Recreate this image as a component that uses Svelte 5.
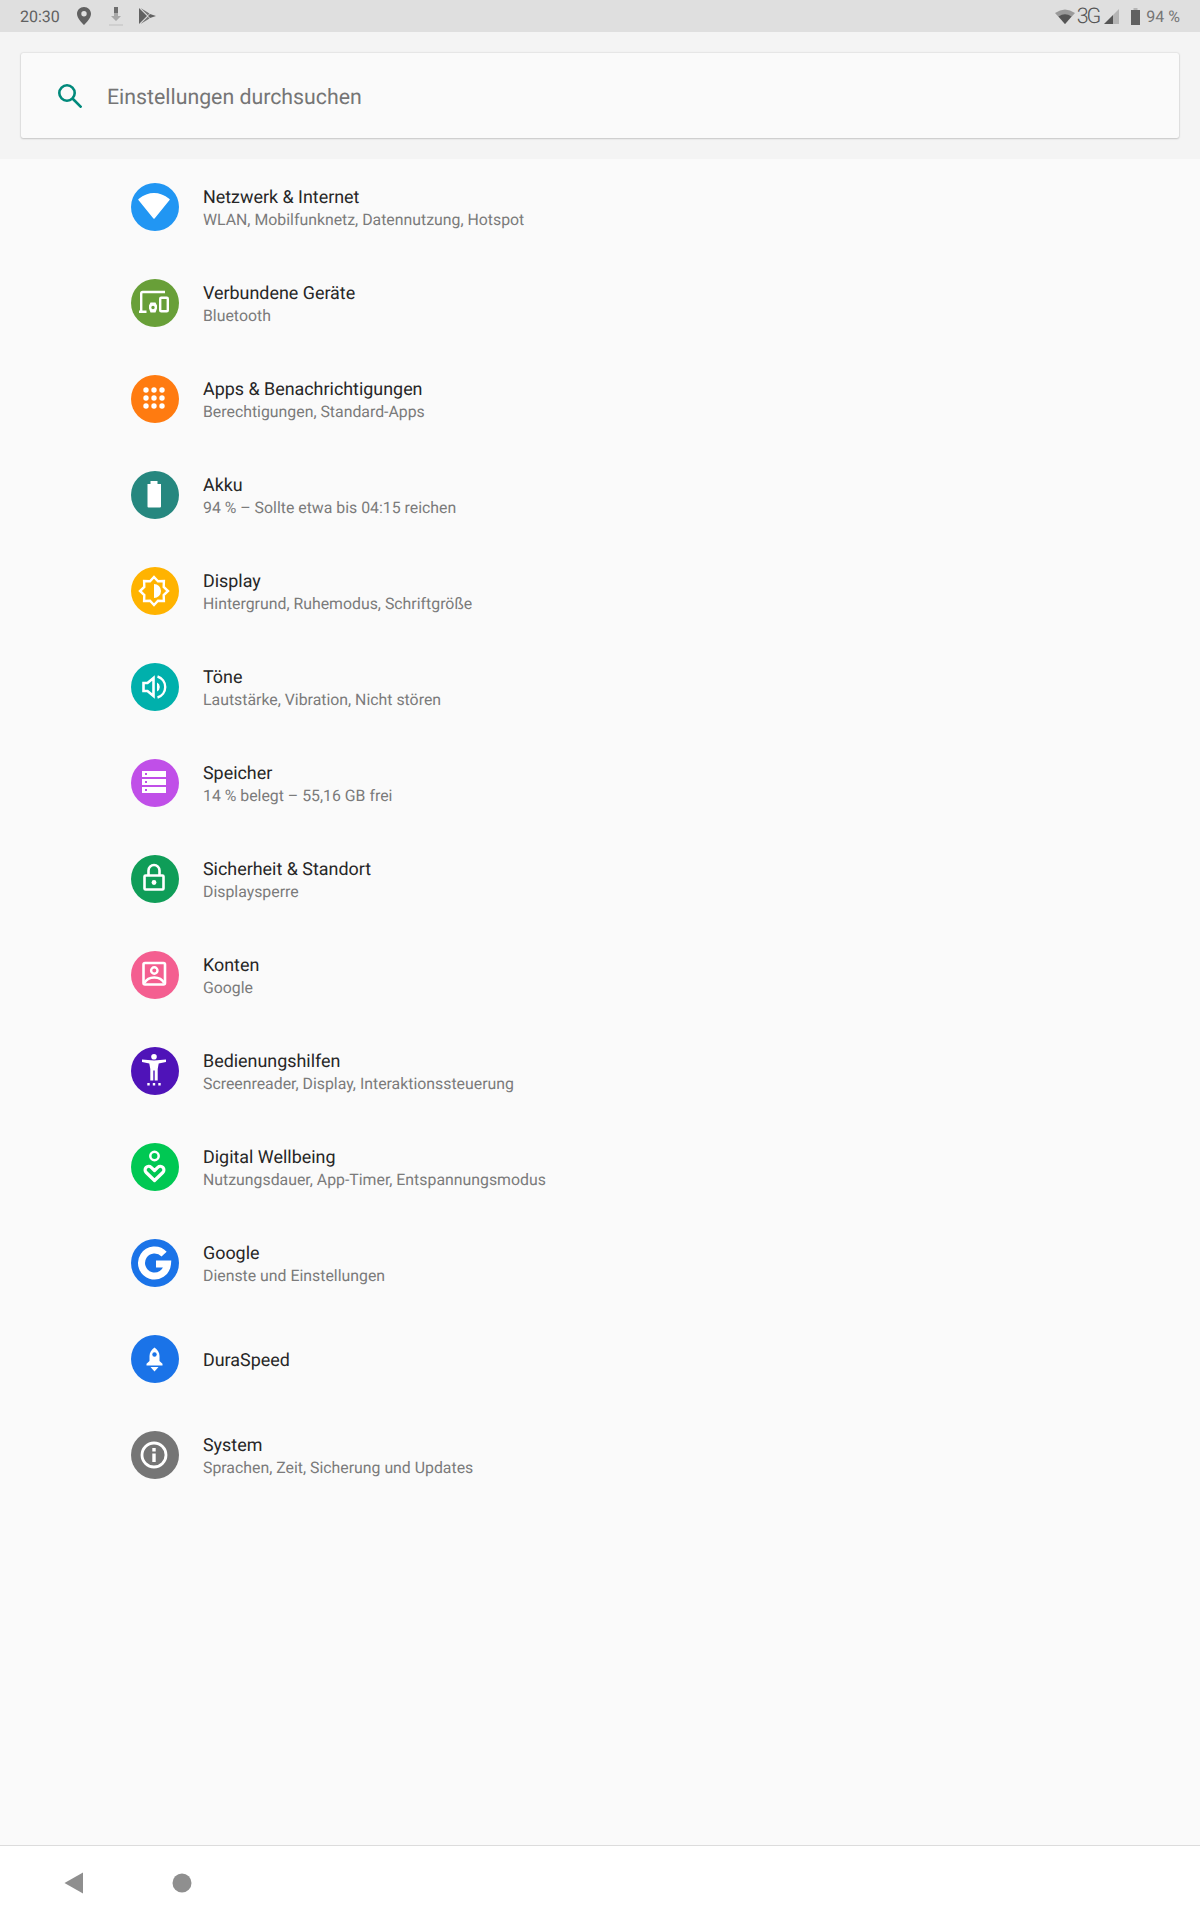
<script>
	const items = [
		{ icon: 'wifi', color: '#2196f3', title: 'Netzwerk & Internet', sub: 'WLAN, Mobilfunknetz, Datennutzung, Hotspot' },
		{ icon: 'devices', color: '#689f38', title: 'Verbundene Geräte', sub: 'Bluetooth' },
		{ icon: 'apps', color: '#ff7b10', title: 'Apps & Benachrichtigungen', sub: 'Berechtigungen, Standard-Apps' },
		{ icon: 'battery', color: '#26877f', title: 'Akku', sub: '94 % – Sollte etwa bis 04:15 reichen' },
		{ icon: 'display', color: '#ffb300', title: 'Display', sub: 'Hintergrund, Ruhemodus, Schriftgröße' },
		{ icon: 'sound', color: '#00b0ac', title: 'Töne', sub: 'Lautstärke, Vibration, Nicht stören' },
		{ icon: 'storage', color: '#c04fe8', title: 'Speicher', sub: '14 % belegt – 55,16 GB frei' },
		{ icon: 'lock', color: '#0f9d58', title: 'Sicherheit & Standort', sub: 'Displaysperre' },
		{ icon: 'account', color: '#f45e90', title: 'Konten', sub: 'Google' },
		{ icon: 'a11y', color: '#4f13b8', title: 'Bedienungshilfen', sub: 'Screenreader, Display, Interaktionssteuerung' },
		{ icon: 'wellbeing', color: '#00c853', title: 'Digital Wellbeing', sub: 'Nutzungsdauer, App-Timer, Entspannungsmodus' },
		{ icon: 'google', color: '#1a73e8', title: 'Google', sub: 'Dienste und Einstellungen' },
		{ icon: 'rocket', color: '#1a73e8', title: 'DuraSpeed', sub: '' },
		{ icon: 'info', color: '#757575', title: 'System', sub: 'Sprachen, Zeit, Sicherung und Updates' }
	];
</script>

<div class="screen">
	<div class="status">
		<div class="status-left">
			<span class="time">20:30</span>
			<svg class="pin" width="16" height="20" viewBox="0 0 16 20">
				<path fill="#616161" d="M8 1C4 1 1 4 1 7.8 1 12 5.5 16.5 8 19c2.500-2.500 7-7 7-11.200C15 4 12 1 8 1zm0 9.500a2.700 2.700 0 1 1 0-5.400 2.700 2.700 0 0 1 0 5.400z" />
			</svg>
			<svg class="dl" width="16" height="20" viewBox="0 0 16 20">
				<rect x="6" y="1" width="4" height="6" fill="#6e6e6e" />
				<path fill="#a8a8a8" d="M6 7h4v3h3l-5 5-5-5h3z" />
				<rect x="1" y="18" width="14" height="2" fill="#cfcfcf" />
			</svg>
			<svg class="play" width="17" height="16" viewBox="0 0 17 16">
				<path fill="#616161" d="M0 0l8 8-8 8z" />
				<path fill="#757575" d="M1.500 0l9 5.500L8.800 7.200zM1.500 16l9-5.500-1.700-1.700z" />
				<path fill="#616161" d="M11 6l6 2-6 2-2-2z" />
			</svg>
		</div>
		<div class="status-right">
			<svg width="20" height="15" viewBox="0 0 20 15">
				<path fill="#9a9a9a" d="M0 4Q10-3 20 4l-10 11z" />
				<path fill="#555" d="M3.500 7.500Q10 3 16.500 7.500L10 15z" />
			</svg>
			<span class="net">3G</span>
			<svg class="signal" width="15" height="15" viewBox="0 0 15 15">
				<path fill="#b5b5b5" d="M15 0v15H9V6z" />
				<path fill="#555" d="M9 6v9H0z" />
			</svg>
			<svg class="batt" width="9" height="17" viewBox="0 0 9 17">
				<path fill="#b5b5b5" d="M2.500 0h4v2h-4z" />
				<path fill="#616161" d="M0 2h9v15H0z" />
			</svg>
			<span class="pct">94 %</span>
		</div>
	</div>

	<div class="header">
		<div class="search">
			<svg class="lens" width="24" height="24" viewBox="0 0 24 24">
				<circle cx="9" cy="9" r="7.700" fill="none" stroke="#00897b" stroke-width="2.600" />
				<path d="M14.500 14.500l9 9" stroke="#00897b" stroke-width="2.600" />
			</svg>
			<span class="hint">Einstellungen durchsuchen</span>
		</div>
	</div>

	<main class="list">
		{#each items as item}
			<div class="row">
				<svg class="icon" width="48" height="48" viewBox="0 0 48 48">
					<circle cx="24" cy="24" r="24" fill={item.color} />
					{#if item.icon === 'wifi'}
						<path fill="#fff" stroke="#fff" stroke-width="1.500" stroke-linejoin="round" d="M8 16.500Q23 5 38 16.500L23 35z" />
					{:else if item.icon === 'devices'}
						<path fill="none" stroke="#fff" stroke-width="2.400" d="M10.200 32V14.500a1.500 1.500 0 0 1 1.500-1.500H34" />
						<rect x="29.200" y="18.700" width="7.600" height="13.600" rx="1" fill="none" stroke="#fff" stroke-width="2.400" />
						<path fill="#fff" d="M8 31.500h7.500V34H8z" />
						<path fill="#fff" fill-rule="evenodd" d="M19.500 23.500h5l1.500 3v3l-1.500 4h-5l-1.500-4v-3zM22 26.800a1.700 1.700 0 1 0 0 3.400 1.700 1.700 0 0 0 0-3.400z" />
					{:else if item.icon === 'apps'}
						{#each [15, 23, 31] as y}
							{#each [15, 23, 31] as x}
								<circle cx={x} cy={y} r="2.700" fill="#fff" />
							{/each}
						{/each}
					{:else if item.icon === 'battery'}
						<path fill="#fff" d="M19.500 10h7v3H30v22.500a1 1 0 0 1-1 1H17.500a1 1 0 0 1-1-1V13h3z" />
					{:else if item.icon === 'display'}
						<path fill="none" stroke="#fff" stroke-width="2.400" d="M23 10l4 4.300 5.900-.200-.200 5.900L37 24l-4.300 4 .2 5.900-5.900-.2-4 4.300-4-4.300-5.900.2.200-5.900L9 24l4.300-4-.2-5.900 5.900.2z" />
						<path fill="#fff" d="M23 17a7 7 0 0 1 0 14z" />
					{:else if item.icon === 'sound'}
						<path fill="none" stroke="#fff" stroke-width="2.600" d="M12.500 20h4l6-5v18l-6-5h-4z" />
						<path fill="#fff" d="M26 19.500a5 5 0 0 1 0 9z" />
						<path fill="none" stroke="#fff" stroke-width="2.400" d="M26.500 13.500a11 11 0 0 1 0 21" />
					{:else if item.icon === 'storage'}
						<path fill="#fff" fill-rule="evenodd" d="M11 12h24v6H11zM14 14v2h2v-2zM11 20h24v6H11zM14 22v2h2v-2zM11 28h24v6H11zM14 30v2h2v-2z" />
					{:else if item.icon === 'lock'}
						<path fill="none" stroke="#fff" stroke-width="2.600" d="M14.500 20.500h17a1 1 0 0 1 1 1v12a1 1 0 0 1-1 1h-17a1 1 0 0 1-1-1v-12a1 1 0 0 1 1-1zM17.500 20.500v-5a5.500 5.500 0 0 1 11 0v5" />
						<circle cx="23" cy="27.500" r="2.400" fill="#fff" />
					{:else if item.icon === 'account'}
						<rect x="12.500" y="12" width="21.500" height="21.500" rx="1.500" fill="none" stroke="#fff" stroke-width="2.600" />
						<circle cx="23.300" cy="19.500" r="3.200" fill="none" stroke="#fff" stroke-width="2.400" />
						<path fill="none" stroke="#fff" stroke-width="2.400" d="M13.500 32c2-4 6.300-5.500 9.800-5.500s7.800 1.500 9.800 5.500" />
					{:else if item.icon === 'a11y'}
						<circle cx="23" cy="9.700" r="2.800" fill="#fff" />
						<path fill="#fff" fill-rule="evenodd" d="M11 12.500l12 1 12-1v2.500l-7.300 1.500-1 5.500v11.500h-3v-10h-1.400v10h-3V22l-1-5.500L11 15z" />
						<path fill="#fff" d="M16.300 36h2.400v2.400h-2.400zM21.800 36h2.400v2.400h-2.400zM27.300 36h2.400v2.400h-2.400z" />
					{:else if item.icon === 'wellbeing'}
						<circle cx="23.500" cy="13" r="4.200" fill="none" stroke="#fff" stroke-width="2.500" />
						<path fill="none" stroke="#fff" stroke-width="3.200" stroke-linejoin="round" d="M23.500 37.500l-8.300-8a3.600 3.600 0 0 1 5-5.200l3.300 3.200 3.300-3.200a3.600 3.600 0 0 1 5 5.200z" />
					{:else if item.icon === 'google'}
						<path fill="none" stroke="#fff" stroke-width="7" d="M33.100 15.200A13 13 0 1 0 36.500 25H25" />
					{:else if item.icon === 'rocket'}
						<path fill="#fff" d="M23.500 12.500c3 2 5 5 5 8.500v5l3 2.800v1.700h-16v-1.700l3-2.800v-5c0-3.500 2-6.500 5-8.500z" />
						<path fill="#fff" d="M19.500 32h8l-4 4.500z" />
						<circle cx="23.500" cy="19.500" r="2.200" fill="#1a73e8" />
					{:else if item.icon === 'info'}
						<circle cx="23" cy="24" r="12" fill="none" stroke="#fff" stroke-width="2.800" />
						<path fill="#fff" d="M21.300 22.500h3.400V31h-3.400zM21.300 17h3.400v3.400h-3.400z" />
					{/if}
				</svg>
				<div class="text">
					<div class="title" class:solo={!item.sub}>{item.title}</div>
					{#if item.sub}<div class="sub">{item.sub}</div>{/if}
				</div>
			</div>
		{/each}
	</main>

	<div class="nav">
		<svg width="20" height="22" viewBox="0 0 20 22" class="back">
			<path fill="#8f8f8f" d="M19 0.500v21L0.500 11z" />
		</svg>
		<svg width="20" height="20" viewBox="0 0 20 20" class="home">
			<circle cx="10" cy="10" r="9.500" fill="#8f8f8f" />
		</svg>
	</div>
</div>

<style>
	:global(body) {
		margin: 0;
		background: #fafafa;
	}
	.screen {
		width: 1200px;
		height: 1920px;
		display: flex;
		flex-direction: column;
		font-family: Roboto, 'Liberation Sans', sans-serif;
		text-rendering: geometricPrecision;
		background: #fafafa;
		overflow: hidden;
	}
	.status {
		height: 32px;
		flex: none;
		background: #dfdfdf;
		display: flex;
		justify-content: space-between;
		align-items: center;
		padding: 0 20px;
		color: #616161;
		font-size: 16px;
	}
	.status-left,
	.status-right {
		display: flex;
		align-items: center;
	}
	.pin {
		margin-left: 16px;
	}
	.dl {
		margin-left: 16px;
	}
	.play {
		margin-left: 15px;
	}
	.status-right svg:first-child {
		margin-right: 1px;
	}
	.net {
		font-size: 21.500px;
		letter-spacing: -2px;
		margin-left: 1px;
		color: #555;
		font-weight: 300;
	}
	.signal {
		margin-left: 5px;
	}
	.batt {
		margin-left: 12px;
	}
	.pct {
		margin-left: 6px;
		color: #757575;
	}
	.header {
		height: 127px;
		flex: none;
		box-sizing: border-box;
		background: #f4f4f4;
		padding: 21px;
	}
	.search {
		height: 85px;
		box-sizing: border-box;
		background: #fafafa;
		border-radius: 2px;
		box-shadow: 0 0 2px rgba(0, 0, 0, 0.2), 0 1px 2px rgba(0, 0, 0, 0.14);
		display: flex;
		align-items: center;
		padding-left: 37px;
		color: #757575;
		font-size: 21.300px;
	}
	.lens {
		margin-right: 25px;
	}
	.hint {
		padding-top: 3px;
	}
	.list {
		flex: 1;
	}
	.row {
		height: 96px;
		display: flex;
		align-items: center;
		padding-left: 131px;
	}
	.icon {
		flex: none;
		margin-right: 24px;
	}
	.title {
		font-size: 17.900px;
		line-height: 24px;
		padding-top: 1px;
		color: #262626;
	}
	.title.solo {
		padding-top: 3px;
	}
	.sub {
		font-size: 15.850px;
		line-height: 21px;
		margin-top: -1px;
		color: #7b7b7b;
	}
	.nav {
		height: 75px;
		flex: none;
		box-sizing: border-box;
		background: #fff;
		border-top: 1px solid #dcdcdc;
		display: flex;
		align-items: center;
		padding-left: 64px;
	}
	.home {
		margin-left: 88px;
	}
</style>
